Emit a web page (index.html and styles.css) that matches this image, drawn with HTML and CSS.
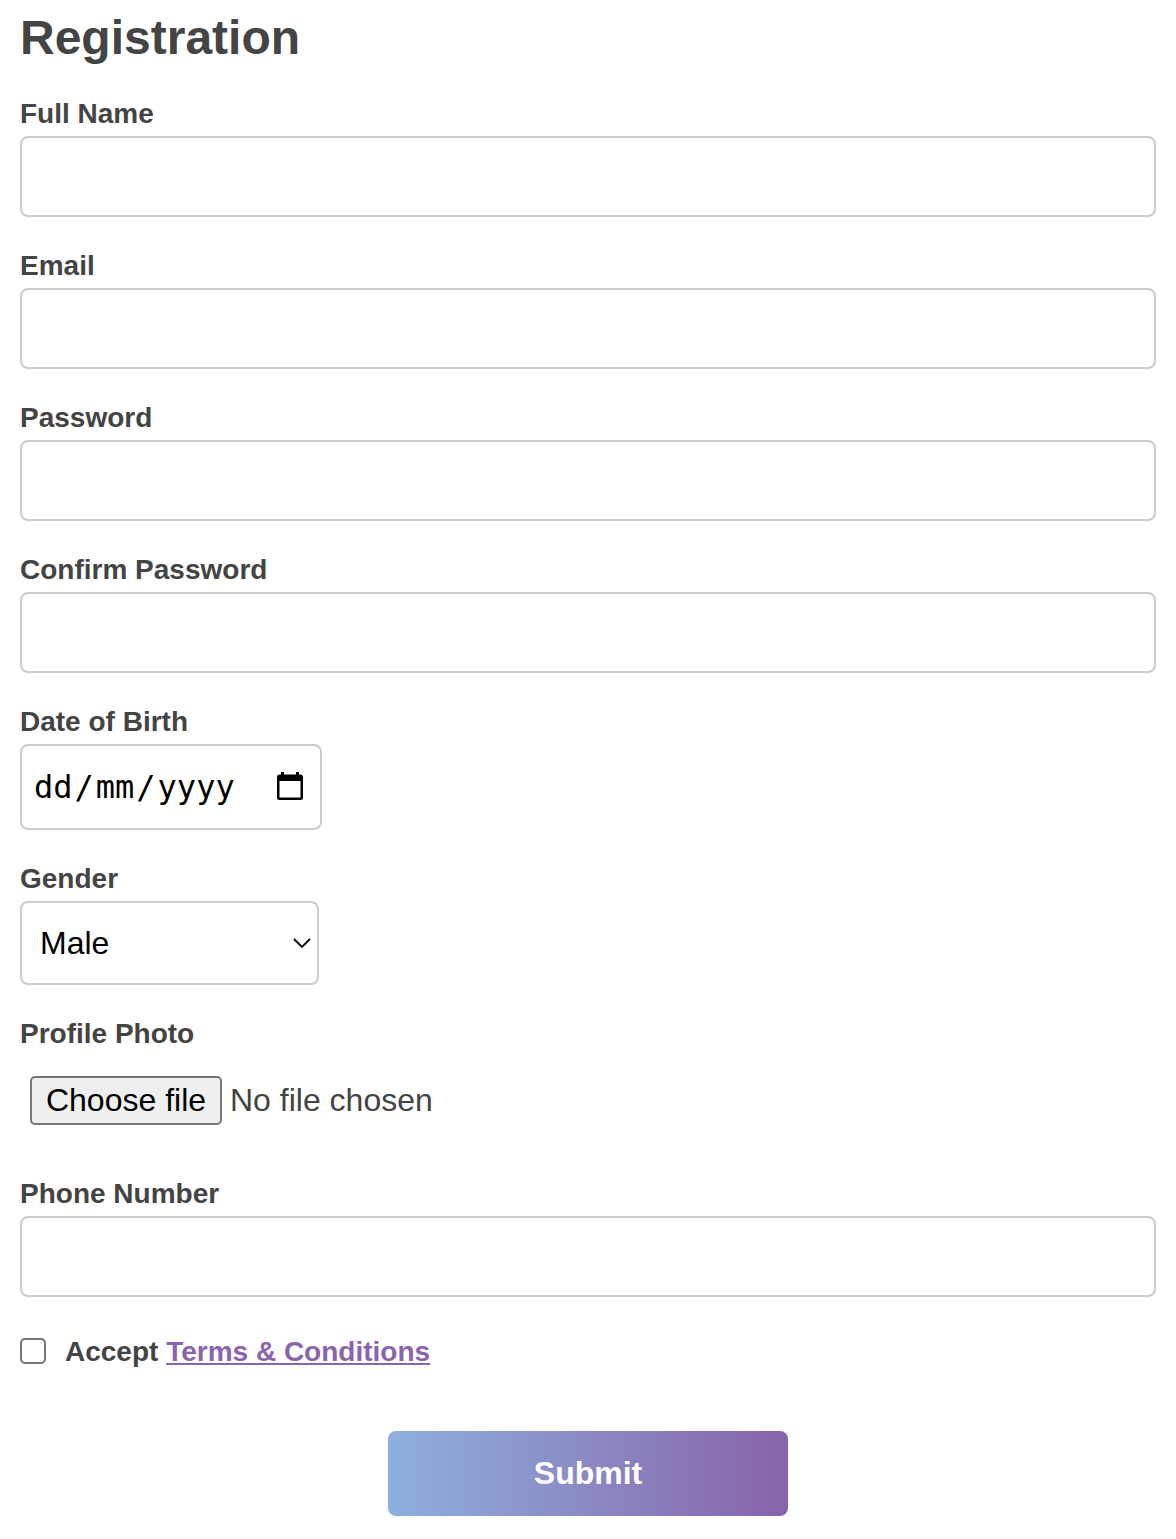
FILE: index.html
```html
<!DOCTYPE html>
<html lang="en">
<head>
<meta charset="utf-8">
<title>Registration</title>
<link rel="stylesheet" href="styles.css">
</head>
<body>
<form class="form">
  <h1 class="title">Registration</h1>
  <div class="field">
    <label class="label" for="name">Full Name</label>
    <input class="input" id="name" type="text">
  </div>
  <div class="field">
    <label class="label" for="email">Email</label>
    <input class="input" id="email" type="email">
  </div>
  <div class="field">
    <label class="label" for="password">Password</label>
    <input class="input" id="password" type="password">
  </div>
  <div class="field">
    <label class="label" for="confirm">Confirm Password</label>
    <input class="input" id="confirm" type="password">
  </div>
  <div class="field">
    <span class="label">Date of Birth</span>
    <div class="date" tabindex="0">
      <span class="date-text"><span>dd</span><span class="slash">/</span><span>mm</span><span class="slash">/</span><span>yyyy</span></span>
      <svg class="calendar" width="26" height="28" viewBox="0 0 26 28" aria-hidden="true">
        <path fill-rule="evenodd" d="M4 0h3v2.500h12V0h3v2.500h1.500A2.500 2.500 0 0 1 26 5v20.500a2.500 2.500 0 0 1-2.500 2.500h-21A2.500 2.500 0 0 1 0 25.500V5a2.500 2.500 0 0 1 2.500-2.500H4zM2.500 9v16.500h21V9z"/>
      </svg>
    </div>
  </div>
  <div class="field">
    <span class="label">Gender</span>
    <div class="select" tabindex="0">
      <span>Male</span>
      <svg class="chevron" width="18" height="11" viewBox="0 0 18 11" aria-hidden="true">
        <path d="M1 1l8 8 8-8" fill="none" stroke="#000" stroke-width="1.900"/>
      </svg>
    </div>
  </div>
  <div class="field">
    <span class="label">Profile Photo</span>
    <div class="file">
      <button class="file-button" type="button">Choose file</button>
      <span>No file chosen</span>
    </div>
  </div>
  <div class="field">
    <label class="label" for="phone">Phone Number</label>
    <input class="input" id="phone" type="tel">
  </div>
  <div class="terms">
    <input class="checkbox" id="terms" type="checkbox">
    <label class="label terms-label" for="terms">Accept <a class="link" href="#">Terms &amp; Conditions</a></label>
  </div>
  <button class="submit" type="submit">Submit</button>
</form>
</body>
</html>
```
FILE: styles.css
```css
* {
  box-sizing: border-box;
}

body {
  margin: 0;
  background: #fff;
  color: #444;
  font-family: "Liberation Sans", Arial, sans-serif;
  font-size: 32px;
}

.form {
  display: flex;
  flex-direction: column;
  padding: 10px 20px 23px;
}

.title {
  margin: 0 0 32px;
  font-size: 48px;
  line-height: 56px;
}

.field {
  display: flex;
  flex-direction: column;
  align-items: flex-start;
  gap: 7px;
  margin-bottom: 33px;
}

.label {
  font-size: 28px;
  font-weight: bold;
  line-height: 31px;
}

.input,
.date,
.select {
  border: 2px solid #ccc;
  border-radius: 8px;
  background: #fff;
  color: #000;
}

.input {
  width: 100%;
  height: 81px;
  padding: 20px;
  font: inherit;
}

.date {
  display: flex;
  align-items: center;
  justify-content: space-between;
  width: 302px;
  height: 86px;
  padding: 0 17px 0 12px;
}

.date-text {
  font: 32px/40px "DejaVu Sans Mono", monospace;
}

.slash {
  padding: 0 2px;
}

.calendar {
  margin-bottom: 2px;
}

.select {
  display: flex;
  align-items: center;
  justify-content: space-between;
  width: 299px;
  height: 84px;
  padding: 0 6px 0 18px;
}

.file {
  display: flex;
  align-items: center;
  gap: 8px;
  height: 89px;
  padding-left: 10px;
}

.file-button {
  width: 192px;
  height: 49px;
  padding: 0;
  border: 2px solid #767676;
  border-radius: 5px;
  background: #efefef;
  color: #000;
  font: inherit;
}

.terms {
  display: flex;
  align-items: flex-start;
  gap: 19px;
  height: 42px;
  margin-bottom: 59px;
  padding-top: 8px;
}

.terms-label {
  margin-top: -2px;
}

.checkbox {
  appearance: none;
  width: 26px;
  height: 26px;
  margin: 0;
  border: 2px solid #767676;
  border-radius: 5px;
  background: #fff;
}

.link {
  color: #8a64ad;
}

.submit {
  align-self: center;
  width: 400px;
  height: 85px;
  padding: 0;
  border: 0;
  border-radius: 8px;
  background: linear-gradient(to right, #8db0de, #8862aa);
  color: #fff;
  font: bold 32px "Liberation Sans", Arial, sans-serif;
}
```
